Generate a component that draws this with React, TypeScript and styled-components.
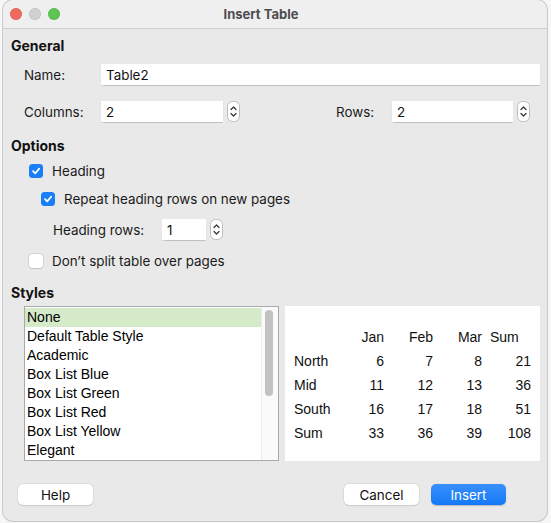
import React from 'react';
import styled, { createGlobalStyle } from 'styled-components';

const GlobalStyle = createGlobalStyle`
  html, body {
    margin: 0;
    padding: 0;
    background: #ffffff;
  }
  body {
    font-family: Inter, "Liberation Sans", sans-serif;
    -webkit-font-smoothing: antialiased;
  }
`;

const Page = styled.div`
  width: 551px;
  height: 523px;
  display: flex;
  background: #f7f7f7;
  overflow: hidden;
`;

const Dialog = styled.div`
  margin: 0 4px 2px 3px;
  flex: 1;
  display: flex;
  flex-direction: column;
  background: #e9e9e9;
  border-radius: 10px;
  box-shadow: 0 0 0 1px #c9c9c9;
  overflow: hidden;
`;

const TitleBar = styled.div`
  height: 28px;
  flex: none;
  display: grid;
  grid-template-columns: 70px 1fr 98px;
  align-items: center;
  background: #efefef;
  border-bottom: 1px solid #cfcfcf;
`;

const Lights = styled.div`
  display: flex;
  gap: 7px;
  padding-left: 7px;
`;

const Light = styled.span<{ $c: string }>`
  width: 12px;
  height: 12px;
  border-radius: 50%;
  background: ${(p) => p.$c};
  box-shadow: inset 0 0 0 0.5px rgba(0, 0, 0, 0.12);
`;

const Title = styled.div`
  text-align: center;
  font-size: 13px;
  font-weight: 700;
  color: #4d4d4d;
`;

const Body = styled.div`
  flex: 1;
  display: flex;
  flex-direction: column;
  padding: 0 7px 0 8px;
`;

const SectionTitle = styled.div<{ $mt: number }>`
  margin-top: ${(p) => p.$mt}px;
  height: 17px;
  line-height: 17px;
  font-size: 14px;
  font-weight: 700;
  color: #111;
`;

const Row = styled.div<{ $mt: number; $indent?: number }>`
  margin-top: ${(p) => p.$mt}px;
  padding-left: ${(p) => p.$indent ?? 13}px;
  display: flex;
  align-items: center;
  min-height: 18px;
`;

const Label = styled.div<{ $w?: number }>`
  width: ${(p) => (p.$w ? `${p.$w}px` : 'auto')};
  flex: none;
  font-size: 13.4px;
  color: #1a1a1a;
`;

const Field = styled.div<{ $w?: number }>`
  width: ${(p) => (p.$w ? `${p.$w}px` : 'auto')};
  flex: ${(p) => (p.$w ? 'none' : '1')};
  height: 21px;
  box-sizing: border-box;
  background: #fff;
  padding-left: 5px;
  display: flex;
  align-items: center;
  font-size: 13.4px;
  color: #111;
  box-shadow: 0 0.5px 1px rgba(0, 0, 0, 0.18);
`;

const SpinBox = styled.div`
  display: flex;
  align-items: center;
  gap: 4px;
`;

const SpinButton = styled.svg`
  width: 13px;
  height: 21px;
  flex: none;
`;

const Spacer = styled.div`
  flex: 1;
`;

const Check = styled.span<{ $on: boolean }>`
  width: 14px;
  height: 14px;
  box-sizing: border-box;
  border-radius: 3.5px;
  flex: none;
  margin-right: 9px;
  display: flex;
  align-items: center;
  justify-content: center;
  background: ${(p) => (p.$on ? '#1a7ff7' : '#ffffff')};
  box-shadow: ${(p) => (p.$on ? 'none' : '0 0 0 0.5px #c4c4c4, 0 0.5px 1px rgba(0,0,0,0.15)')};
`;

const StylesArea = styled.div`
  margin-top: 5px;
  margin-left: 13px;
  display: grid;
  grid-template-columns: 255px 255px;
  gap: 6px;
  height: 155px;
`;

const ListBox = styled.div`
  position: relative;
  background: #fff;
  border: 1px solid #a9a9a9;
  box-sizing: border-box;
  padding-top: 1px;
  padding-right: 16px;
  font-family: "Liberation Sans", Arial, sans-serif;
  font-size: 14px;
  color: #000;
  overflow: hidden;
`;

const ListItem = styled.div<{ $sel?: boolean }>`
  height: 19px;
  line-height: 19px;
  padding-left: 2px;
  background: ${(p) => (p.$sel ? '#d4eac9' : 'transparent')};
`;

const ScrollTrack = styled.div`
  position: absolute;
  top: 0;
  right: 0;
  bottom: 0;
  width: 16px;
  border-left: 1px solid #ececec;
  background: #fafafa;
`;

const ScrollThumb = styled.div`
  margin: 3px 0 0 3px;
  width: 8px;
  height: 86px;
  border-radius: 4px;
  background: #c2c2c2;
`;

const Preview = styled.div`
  background: #fff;
  padding: 19px 9px 0 9px;
  font-family: "Liberation Sans", Arial, sans-serif;
  font-size: 14px;
  color: #111;
`;

const PreviewGrid = styled.div`
  display: grid;
  grid-template-columns: 41px repeat(4, 49px);
  grid-auto-rows: 24px;
  align-items: center;
`;

const Cell = styled.div<{ $left?: boolean; $pad?: number }>`
  text-align: ${(p) => (p.$left ? 'left' : 'right')};
  padding-left: ${(p) => p.$pad ?? 0}px;
`;

const ButtonBar = styled.div`
  margin-top: 23px;
  display: flex;
  align-items: center;
  padding-left: 7px;
  padding-right: 34px;
  gap: 12px;
`;

const Button = styled.div<{ $primary?: boolean }>`
  width: 75px;
  height: 21px;
  box-sizing: border-box;
  border-radius: 5px;
  display: flex;
  align-items: center;
  justify-content: center;
  font-size: 13.4px;
  color: ${(p) => (p.$primary ? '#fff' : '#111')};
  background: ${(p) => (p.$primary ? 'linear-gradient(#3a8ffc, #1479f7)' : '#fff')};
  box-shadow: ${(p) =>
    p.$primary ? '0 0.5px 1px rgba(0,0,0,0.2)' : '0 0 0 0.5px #cfcfcf, 0 0.5px 1px rgba(0,0,0,0.15)'};
`;

const Spin = () => (
  <SpinButton viewBox="0 0 13 21">
    <rect x="0.5" y="0.5" width="12" height="20" rx="5" fill="#fff" stroke="#bdbdbd" />
    <path d="M4 8.5 L6.5 6 L9 8.5" fill="none" stroke="#333" strokeWidth="1.2" strokeLinecap="round" strokeLinejoin="round" />
    <path d="M4 12.5 L6.5 15 L9 12.5" fill="none" stroke="#333" strokeWidth="1.2" strokeLinecap="round" strokeLinejoin="round" />
  </SpinButton>
);

const CheckBox = ({ on }: { on: boolean }) => (
  <Check $on={on}>
    {on && (
      <svg width="10" height="10" viewBox="0 0 10 10">
        <path d="M2 5.2 L4.2 7.4 L8.2 2.6" fill="none" stroke="#fff" strokeWidth="1.7" strokeLinecap="round" strokeLinejoin="round" />
      </svg>
    )}
  </Check>
);

const styles = [
  'None',
  'Default Table Style',
  'Academic',
  'Box List Blue',
  'Box List Green',
  'Box List Red',
  'Box List Yellow',
  'Elegant',
];

const table = [
  ['North', 6, 7, 8, 21],
  ['Mid', 11, 12, 13, 36],
  ['South', 16, 17, 18, 51],
  ['Sum', 33, 36, 39, 108],
];

export default function App() {
  return (
    <Page>
      <GlobalStyle />
      <Dialog>
        <TitleBar>
          <Lights>
            <Light $c="#ee6a5f" />
            <Light $c="#d0d0d0" />
            <Light $c="#5ec454" />
          </Lights>
          <Title>Insert Table</Title>
          <div />
        </TitleBar>
        <Body>
          <SectionTitle $mt={8}>General</SectionTitle>
          <Row $mt={10}>
            <Label $w={77}>Name:</Label>
            <Field>Table2</Field>
          </Row>
          <Row $mt={16}>
            <Label $w={77}>Columns:</Label>
            <SpinBox>
              <Field $w={122}>2</Field>
              <Spin />
            </SpinBox>
            <Spacer />
            <Label $w={56}>Rows:</Label>
            <SpinBox>
              <Field $w={121}>2</Field>
              <Spin />
            </SpinBox>
            <div style={{ width: 10 }} />
          </Row>

          <SectionTitle $mt={15}>Options</SectionTitle>
          <Row $mt={8} $indent={18}>
            <CheckBox on />
            <Label>Heading</Label>
          </Row>
          <Row $mt={10} $indent={30}>
            <CheckBox on />
            <Label>Repeat heading rows on new pages</Label>
          </Row>
          <Row $mt={11} $indent={42}>
            <Label $w={109}>Heading rows:</Label>
            <SpinBox>
              <Field $w={44}>1</Field>
              <Spin />
            </SpinBox>
          </Row>
          <Row $mt={12} $indent={18}>
            <CheckBox on={false} />
            <Label>Don’t split table over pages</Label>
          </Row>

          <SectionTitle $mt={14}>Styles</SectionTitle>
          <StylesArea>
            <ListBox>
              {styles.map((s, i) => (
                <ListItem key={s} $sel={i === 0}>
                  {s}
                </ListItem>
              ))}
              <ScrollTrack>
                <ScrollThumb />
              </ScrollTrack>
            </ListBox>
            <Preview>
              <PreviewGrid>
                <div />
                <Cell>Jan</Cell>
                <Cell>Feb</Cell>
                <Cell>Mar</Cell>
                <Cell $left $pad={8}>
                  Sum
                </Cell>
                {table.map((r) =>
                  r.map((v, i) => (
                    <Cell key={`${r[0]}-${i}`} $left={i === 0}>
                      {v}
                    </Cell>
                  ))
                )}
              </PreviewGrid>
            </Preview>
          </StylesArea>

          <ButtonBar>
            <Button>Help</Button>
            <Spacer />
            <Button>Cancel</Button>
            <Button $primary>Insert</Button>
          </ButtonBar>
        </Body>
      </Dialog>
    </Page>
  );
}
